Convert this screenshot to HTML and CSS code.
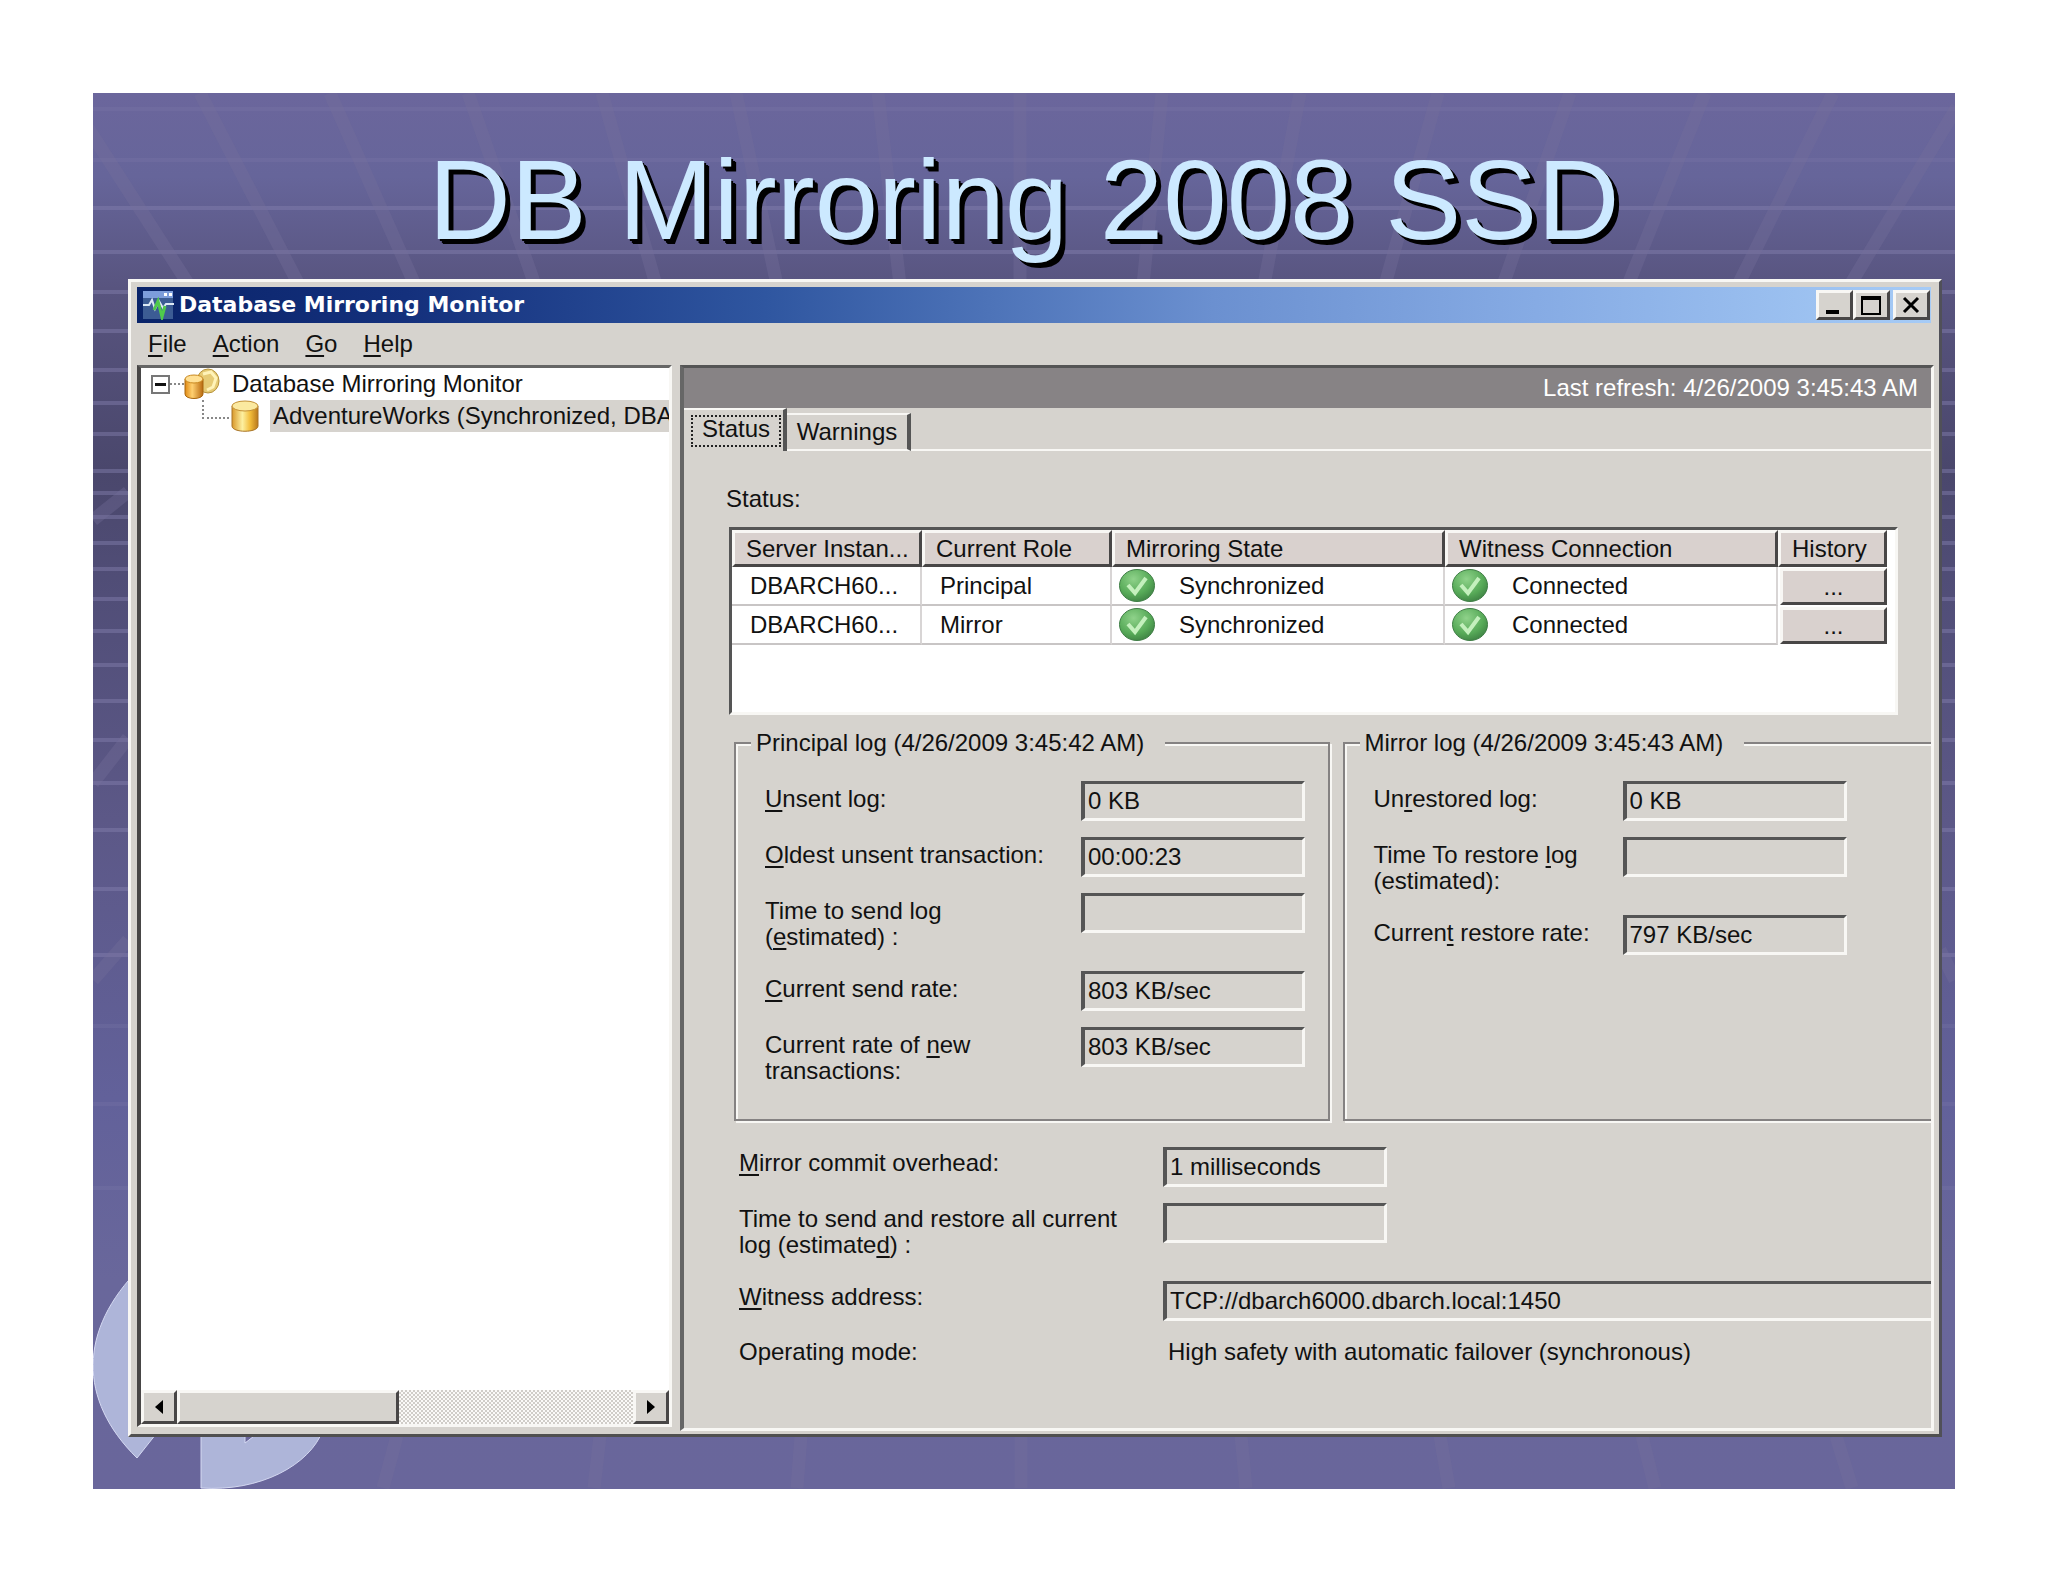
FILE: index.html
```html
<!DOCTYPE html>
<html lang="en">
<head>
<meta charset="utf-8">
<title>DB Mirroring 2008 SSD</title>
<link rel="stylesheet" href="styles.css">
</head>
<body>
<svg class="defs" aria-hidden="true">
  <defs>
    <radialGradient id="okFill" cx="0.4" cy="0.3" r="0.8"><stop offset="0" stop-color="#8fd28a"/><stop offset="0.6" stop-color="#57aa58"/><stop offset="1" stop-color="#3a7a40"/></radialGradient>
    <linearGradient id="gold"><stop offset="0" stop-color="#d9982b"/><stop offset="0.4" stop-color="#fdf0a0"/><stop offset="0.7" stop-color="#f2bc3a"/><stop offset="1" stop-color="#b9781c"/></linearGradient>
    <linearGradient id="amber"><stop offset="0" stop-color="#e08a14"/><stop offset="0.4" stop-color="#ffd070"/><stop offset="1" stop-color="#b96a10"/></linearGradient>
    <symbol id="ok" viewBox="0 0 36 33">
      <ellipse cx="18" cy="16.500" rx="17.500" ry="16" fill="url(#okFill)" stroke="#3f7d45"/>
      <path d="M9 16l7 8L27 9" fill="none" stroke="#c4f0bd" stroke-width="4"/>
    </symbol>
  </defs>
</svg>
<main class="slide">
  <svg class="backdrop" viewBox="93 93 1862 1396" preserveAspectRatio="none" aria-hidden="true">
    <g stroke="#8580b0" stroke-width="4" stroke-opacity="0.2">
      <path d="M93 109H1955M93 160H1955M93 1026H1955M93 1104H1955M93 1188H1955"/>
    </g>
    <g stroke="#8580b0" stroke-width="4" stroke-opacity="0.45">
      <path d="M93 208H1955M93 252H1955M93 292H1955M93 331H1955M93 370H1955M93 403H1955M93 434H1955M93 471H1955M93 493H1955M93 517H1955M93 543H1955M93 569H1955M93 599H1955M93 631H1955M93 665H1955M93 701H1955M93 740H1955M93 783H1955M93 830H1955M93 889H1955M93 955H1955"/>
    </g>
    <g stroke="#75709a" stroke-width="13" stroke-opacity="0.35" fill="none">
      <path d="M86 125L189 285M200 93L299 285M330 93L415 285M468 93L535 285M602 93L656 285M736 93L777 285M878 93L900 285M1020 93V285M1162 93L1143 285M1300 93L1264 285M1438 93L1385 285M1570 93L1503 285M1705 93L1628 285M1833 93L1738 285M1957 107L1850 285"/>
      <path d="M93 520L128 492M93 783L128 738M93 980L128 940M1955 980L1940 950"/>
      <path d="M397 1436L383 1488M600 1436L594 1488M801 1436L797 1488M1021 1436V1488M1241 1436L1246 1488M1440 1436L1449 1488M1642 1436L1655 1488M1836 1436L1852 1488"/>
    </g>
    <g fill="#aeb5d9" stroke="#d5d9f2" stroke-width="1">
      <path d="M140 1268C78 1330 78 1400 137 1458L156 1434V1268Z"/>
      <path d="M201 1430V1488C260 1492 310 1465 323 1430H262L245 1443V1430Z"/>
    </g>
  </svg>

  <h1 class="headline">DB Mirroring 2008 SSD</h1>

  <section class="window" aria-label="Database Mirroring Monitor">
    <header class="titlebar">
      <svg class="app-icon" viewBox="0 0 32 30" aria-hidden="true">
        <rect x="1" y="1" width="30" height="28" fill="#3c5c94"/>
        <rect x="1" y="1" width="30" height="7" fill="#7d9ddb"/>
        <path d="M22 3h3v3h-3zM27 3h3v3h-3z" fill="#fff"/>
        <path d="M1 15h6l3-5 3 9 4-8 4 7 3-4h8" fill="none" stroke="#dce9f5" stroke-width="2"/>
        <path d="M12 20l4-9 4 16 3-11" fill="none" stroke="#4fca4b" stroke-width="3"/>
      </svg>
      <h2 class="caption">Database Mirroring Monitor</h2>
      <div class="caption-buttons">
        <button class="cap" aria-label="Minimize"><svg viewBox="0 0 30 24"><path d="M7 17h13v4H7z"/></svg></button>
        <button class="cap" aria-label="Maximize"><svg viewBox="0 0 30 24"><path d="M5 3h20v19H5zM7 7v13h16V7z" fill-rule="evenodd"/></svg></button>
        <button class="cap cap-close" aria-label="Close"><svg viewBox="0 0 30 24"><path d="M8 5l14 14M22 5L8 19" stroke="#000" stroke-width="3"/></svg></button>
      </div>
    </header>
    <nav class="menubar">
      <a href="#"><u>F</u>ile</a><a href="#"><u>A</u>ction</a><a href="#"><u>G</u>o</a><a href="#"><u>H</u>elp</a>
    </nav>
    <div class="panes">
      <aside class="tree-pane">
        <ul class="tree">
          <li class="node root">
            <button class="expander" aria-label="Collapse"></button>
            <span class="dots"></span>
            <svg class="icon-root" viewBox="0 0 36 32" aria-hidden="true">
              <ellipse cx="24" cy="13" rx="11" ry="12" fill="#e6cb75" stroke="#b6923c"/>
              <path d="M19 6l8-2 5 6-3 9-6 3" fill="none" stroke="#fff3b8" stroke-width="3"/>
              <path d="M1 11v15c0 6 18 6 18 0V11z" fill="url(#amber)" stroke="#a8660e"/>
              <ellipse cx="10" cy="11" rx="9" ry="4" fill="#ffe094" stroke="#c9881f"/>
            </svg>
            <span class="node-text">Database Mirroring Monitor</span>
          </li>
          <li class="node child">
            <span class="elbow"></span>
            <svg class="icon-db" viewBox="0 0 28 32" aria-hidden="true">
              <path d="M1 6v20c0 7 26 7 26 0V6z" fill="url(#gold)" stroke="#a8752a"/>
              <ellipse cx="14" cy="6" rx="13" ry="5" fill="#fbe9a0" stroke="#c49136"/>
            </svg>
            <span class="node-text selected">AdventureWorks (Synchronized, DBA</span>
          </li>
        </ul>
        <div class="scrollbar">
          <button class="arrow" aria-label="Scroll left"><svg viewBox="0 0 12 16"><path d="M10 1v14L2 8z"/></svg></button>
          <div class="thumb"></div>
          <div class="track"></div>
          <button class="arrow" aria-label="Scroll right"><svg viewBox="0 0 12 16"><path d="M2 1v14l8-7z"/></svg></button>
        </div>
      </aside>

      <section class="detail">
        <p class="refresh">Last refresh: 4/26/2009 3:45:43 AM</p>
        <div class="tabs" role="tablist">
          <button class="tab active" role="tab" aria-selected="true"><span>Status</span></button>
          <button class="tab" role="tab" aria-selected="false">Warnings</button>
          <span class="tab-rest"></span>
        </div>
        <div class="panel">
          <p class="status-label" id="status-label">Status:</p>
          <div class="listview">
            <table class="instances" aria-labelledby="status-label">
              <colgroup><col class="c-name"><col class="c-name"><col><col><col class="c-history"></colgroup>
              <thead>
                <tr><th>Server Instan...</th><th>Current Role</th><th>Mirroring State</th><th>Witness Connection</th><th>History</th></tr>
              </thead>
              <tbody>
                <tr>
                  <td>DBARCH60...</td><td>Principal</td>
                  <td class="state"><div><svg><use href="#ok"/></svg>Synchronized</div></td>
                  <td class="state"><div><svg><use href="#ok"/></svg>Connected</div></td>
                  <td class="history"><button>...</button></td>
                </tr>
                <tr>
                  <td>DBARCH60...</td><td>Mirror</td>
                  <td class="state"><div><svg><use href="#ok"/></svg>Synchronized</div></td>
                  <td class="state"><div><svg><use href="#ok"/></svg>Connected</div></td>
                  <td class="history"><button>...</button></td>
                </tr>
              </tbody>
            </table>
          </div>

          <div class="groups">
            <fieldset class="group">
              <legend>Principal log (4/26/2009 3:45:42 AM)</legend>
              <div class="fields principal">
                <label for="unsent"><u>U</u>nsent log:</label><input id="unsent" value="0 KB" readonly>
                <label for="oldest"><u>O</u>ldest unsent transaction:</label><input id="oldest" value="00:00:23" readonly>
                <label for="tsend">Time to send log<br>(<u>e</u>stimated) :</label><input id="tsend" value="" readonly>
                <label for="srate"><u>C</u>urrent send rate:</label><input id="srate" value="803 KB/sec" readonly>
                <label for="nrate">Current rate of <u>n</u>ew<br>transactions:</label><input id="nrate" value="803 KB/sec" readonly>
              </div>
            </fieldset>
            <fieldset class="group cut">
              <legend>Mirror log (4/26/2009 3:45:43 AM)</legend>
              <div class="fields mirror">
                <label for="unrest">Un<u>r</u>estored log:</label><input id="unrest" value="0 KB" readonly>
                <label for="trest">Time To restore <u>l</u>og<br>(estimated):</label><input id="trest" value="" readonly>
                <label for="rrate">Curren<u>t</u> restore rate:</label><input id="rrate" value="797 KB/sec" readonly>
              </div>
            </fieldset>
          </div>

          <div class="fields overall">
            <label for="commit"><u>M</u>irror commit overhead:</label><input id="commit" value="1 milliseconds" readonly>
            <label for="tall">Time to send and restore all current<br>log (estimate<u>d</u>) :</label><input id="tall" value="" readonly>
            <label for="witness"><u>W</u>itness address:</label><input id="witness" class="wide" value="TCP://dbarch6000.dbarch.local:1450" readonly>
            <span class="name">Operating mode:</span><output class="value">High safety with automatic failover (synchronous)</output>
          </div>
        </div>
      </section>
    </div>
  </section>
</main>
</body>
</html>
```
FILE: styles.css
```css
* { box-sizing: border-box; }

:root {
  --face: #d6d3ce;
  --light: #f8f7f4;
  --shade: #858282;
  --dark: #484646;
}

body {
  margin: 0;
  padding: 93px;
  background: #fff;
  font: 24px/26px "Liberation Sans", Arial, sans-serif;
  color: #111;
}

h1, h2, p, ul { margin: 0; padding: 0; font-weight: normal; }

button, input {
  font: inherit;
  color: inherit;
  margin: 0;
  border-radius: 0;
}

u { text-decoration-thickness: 2px; text-underline-offset: 3px; text-decoration-skip-ink: none; }

.defs { position: absolute; width: 0; height: 0; }

.slide {
  position: relative;
  display: flex;
  flex-direction: column;
  min-height: calc(100vh - 186px);
  background: linear-gradient(#6b669c, #66659a 6%, #58547f 14%, #4a476c 27%, #514e78 36%, #5c5887 52%, #62619a 72%, #69679b 85%, #69669b);
}

.backdrop { position: absolute; inset: 0; width: 100%; height: 100%; }

.headline {
  position: relative;
  padding: 43px 0 15px;
  font-size: 114px;
  line-height: 128px;
  text-align: center;
  color: #cce9ff;
  text-shadow: 2px 2px #000, 4px 4px #000, 5px 5px #000;
}

.window {
  position: relative;
  flex: 1;
  display: flex;
  flex-direction: column;
  margin: 0 13px 52px 35px;
  padding: 5px 5px 3px 6px;
  background: var(--face);
  border: 3px solid var(--light);
  border-right-color: #505058;
  border-bottom-color: #505050;
}

.titlebar {
  display: flex;
  align-items: center;
  gap: 5px;
  height: 36px;
  margin-right: 3px;
  padding: 0 1px 0 5px;
  background: linear-gradient(90deg, #0a246a, #14307c 15%, #2f56a0 35%, #6b90d0 60%, #86abe4 78%, #a6cbf6);
}

.app-icon { width: 32px; height: 30px; }

.caption {
  flex: 1;
  font: bold 22px/36px "DejaVu Sans", Verdana, sans-serif;
  color: #fff;
}

.caption-buttons { display: flex; }

.cap {
  width: 37px;
  height: 30px;
  padding: 0;
  background: var(--face);
  border: 3px solid var(--light);
  border-right-color: var(--dark);
  border-bottom-color: var(--dark);
}
.cap svg { display: block; width: 30px; height: 24px; }
.cap-close { margin-left: 3px; }

.menubar { display: flex; gap: 26px; padding-left: 11px; line-height: 42px; }
.menubar a { color: inherit; text-decoration: none; }

.panes { flex: 1; display: grid; grid-template-columns: 535px minmax(0, 1fr); gap: 8px; }

.tree-pane {
  display: flex;
  flex-direction: column;
  justify-content: space-between;
  min-width: 0;
  margin-bottom: 4px;
  background: #fff;
  border: 3px solid var(--light);
  border-top-color: #666;
  border-left: 4px solid var(--dark);
}

.tree { list-style: none; }
.node { display: flex; align-items: center; height: 32px; line-height: 32px; white-space: nowrap; }
.root { padding-left: 10px; }
.child { padding-left: 61px; }
.expander {
  width: 19px;
  height: 19px;
  padding: 0;
  border: 2px solid #777;
  background: linear-gradient(#111, #111) center / 11px 3px no-repeat #fff;
}
.dots { width: 14px; border-top: 2px dotted #888; }
.icon-root { width: 36px; height: 32px; margin-right: 12px; }
.elbow {
  align-self: flex-start;
  width: 27px;
  height: 19px;
  margin-right: 2px;
  border: 2px dotted #888;
  border-width: 0 0 2px 2px;
}
.icon-db { flex: none; width: 28px; height: 32px; margin-right: 11px; }
.selected { flex: 1; padding-left: 3px; background: var(--face); overflow: hidden; }

.scrollbar { display: flex; height: 34px; }
.arrow, .thumb {
  background: var(--face);
  border: 3px solid var(--light);
  border-right-color: var(--dark);
  border-bottom-color: var(--dark);
}
.arrow { display: grid; place-items: center; width: 36px; padding: 0; }
.arrow svg { width: 12px; height: 16px; }
.thumb { width: 222px; }
.track { flex: 1; background: repeating-conic-gradient(#d0cdc8 0 25%, #fbfaf8 0 50%) 0 0 / 4px 4px; }

.detail {
  min-width: 0;
  overflow: hidden;
  background: var(--face);
  border: 3px solid var(--light);
  border-top-color: #555;
  border-left: 4px solid #666;
}

.refresh { padding-right: 13px; line-height: 40px; text-align: right; color: #fff; background: #878385; }

.tabs { display: flex; align-items: flex-end; height: 43px; }
.tab {
  height: 38px;
  width: 124px;
  padding: 0;
  background: var(--face);
  border: 2px solid var(--light);
  border-left: 0;
  border-right: 4px solid #555;
}
.active { width: 103px; height: 43px; padding: 3px 2px 3px 7px; border-bottom: 0; }
.active span { display: block; height: 32px; line-height: 24px; border: 2px dotted #222; }
.tab-rest { flex: 1; border-bottom: 2px solid var(--light); }

.panel { padding: 32px 0 0 42px; }
.status-label { line-height: 32px; }

.listview {
  height: 188px;
  margin: 12px 33px 0 3px;
  background: #fff;
  border: 3px solid var(--light);
  border-top-color: #555;
  border-left-color: #555;
}

.instances { width: calc(100% - 8px); table-layout: fixed; border-collapse: separate; border-spacing: 0; }
.c-name { width: 190px; }
.c-history { width: 109px; }
.instances th {
  height: 37px;
  padding: 0 0 0 11px;
  font-weight: normal;
  text-align: left;
  white-space: nowrap;
  background: #d9d1ce;
  border: 3px solid var(--dark);
  border-top-color: var(--light);
  border-left-color: var(--light);
}
.instances td {
  height: 39px;
  padding: 0 0 0 18px;
  border-right: 2px solid #d8d5d5;
  border-bottom: 2px solid #c8c5c5;
}
.instances .state { padding-left: 7px; }
.state div { display: flex; align-items: center; gap: 24px; }
.state svg { width: 36px; height: 33px; }
.instances .history { padding: 0 0 0 2px; border: 0; }
.history button {
  display: block;
  width: 100%;
  height: 37px;
  padding: 0;
  background: #d9d1ce;
  border: 3px solid var(--dark);
  border-top-color: var(--light);
  border-left-color: var(--light);
}

.groups {
  display: grid;
  grid-template-columns: 595fr 588fr;
  gap: 13px;
  margin: 12px 0 0 8px;
}

.group {
  min-width: 0;
  margin: 0;
  padding: 0 0 30px 15px;
  border: 2px solid var(--shade);
  box-shadow: 2px 2px var(--light), inset 2px 2px var(--light);
}
.cut { border-right: 0; }
.group legend { padding: 0 21px 0 5px; line-height: 32px; background: var(--face); }

.fields { display: grid; gap: 16px 0; align-items: start; }
.fields label { padding: 5px 0; }
.fields input {
  width: 224px;
  height: 40px;
  padding: 0 0 0 3px;
  background: transparent;
  border: 3px solid var(--light);
  border-top-color: #555;
  border-left: 4px solid #555;
}
.principal, .mirror { padding: 22px 0 0 14px; }
.principal { grid-template-columns: 316px 1fr; }
.mirror { grid-template-columns: 249px 1fr; }
.overall { grid-template-columns: 424px 1fr; padding: 26px 0 0 13px; }
.fields.overall label { padding: 3px 0 7px; }
.fields .wide { width: 100%; border-right: 0; }
.value { padding-left: 5px; }
.name, .value { padding-top: 2px; }
```
